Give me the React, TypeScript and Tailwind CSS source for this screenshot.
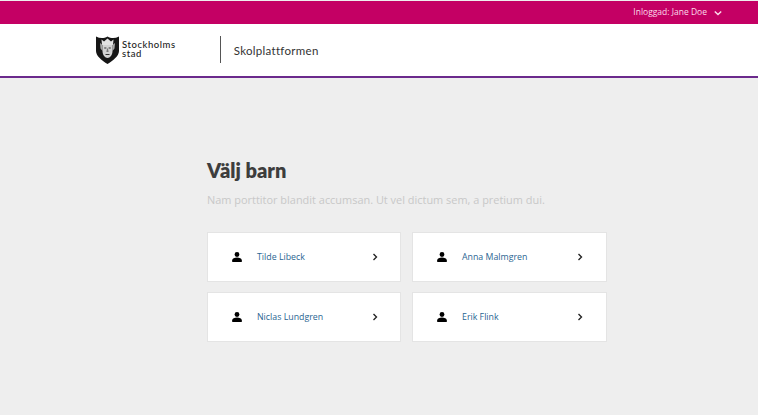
const children = ['Tilde Libeck', 'Anna Malmgren', 'Niclas Lundgren', 'Erik Flink'];

function PersonIcon() {
  return (
    <svg viewBox="0 0 10 10" className="h-[10px] w-[10px] fill-black">
      <circle cx="5" cy="2.5" r="2.4" />
      <path d="M0.2 10 V8.2 C0.2 6.6 2.6 5.6 5 5.6 C7.4 5.6 9.8 6.6 9.8 8.2 V10 Z" />
    </svg>
  );
}

function Chevron({ className }: { className: string }) {
  return (
    <svg viewBox="0 0 8 10" fill="none" stroke="currentColor" strokeWidth="1.8" className={className}>
      <path d="M2 1 L6 5 L2 9" />
    </svg>
  );
}

function Shield() {
  return (
    <svg viewBox="0 0 23 28" className="h-[28px] w-[23px]">
      <path d="M0 0.5 C4 2.5 8 2.5 11.5 0.5 C15 2.5 19 2.5 23 0.5 V15 C23 20 17 24.5 11.5 28 C6 24.5 0 20 0 15 Z" fill="#161616" />
      <path d="M5.5 3.5 L8 5.5 L11.5 2.5 L15 5.5 L17.5 3.5 L17 9 H6 Z" fill="#e2e2e2" />
      <path d="M4 7 L6.5 9 V15 L4.5 12.5 Z M19 7 L16.5 9 V15 L18.5 12.5 Z" fill="#a8a8a8" />
      <path d="M6.5 9 H16.5 V15 C16.5 19 14 22 11.5 22 C9 22 6.5 19 6.5 15 Z" fill="#d2d2d2" />
      <path d="M8.2 11.5 H10.4 V12.5 H8.2 Z M12.6 11.5 H14.8 V12.5 H12.6 Z" fill="#333" />
      <path d="M11 12.5 H12 L12.6 16 H10.4 Z" fill="#777" />
      <path d="M9.5 18 H13.5 V19 H9.5 Z" fill="#333" />
    </svg>
  );
}

export default function App() {
  return (
    <div className="flex min-h-[415px] flex-col bg-[#eeeeee] font-['Open_Sans',sans-serif]">
      <div className="mt-px flex h-[23px] items-center justify-end bg-[#c40064] pr-9 text-[8.5px] text-[#fbdcea]">
        <span>Inloggad: Jane Doe</span>
        <Chevron className="ml-[7px] h-[8px] w-[8px] rotate-90 text-[#fbdcea]" />
      </div>
      <header className="flex h-[54px] items-center border-b-2 border-[#6b2a8c] bg-white pl-[96px]">
        <Shield />
        <div className="ml-[3px] mt-[-3px] font-['Lato',sans-serif] text-[9.5px] font-medium leading-[9px] tracking-[0.55px] text-[#222222]">
          <div>Stockholms</div>
          <div>stad</div>
        </div>
        <div className="ml-[44px] mt-[-1px] h-[27px] w-px bg-[#555555]" />
        <span className="ml-[13px] mt-[1px] font-['Lato',sans-serif] text-[11.5px] tracking-[0.3px] text-[#333333]">Skolplattformen</span>
      </header>
      <main className="pl-[207px] pt-[79px]">
        <h1 className="font-['Lato',sans-serif] text-[20px] font-extrabold leading-[26px] text-[#3d3d3d]">Välj barn</h1>
        <p className="mt-[9px] text-[10.95px] leading-[16px] text-[#c8c8c8]">
          Nam porttitor blandit accumsan. Ut vel dictum sem, a pretium dui.
        </p>
        <div className="mt-[24px] grid w-[400px] grid-cols-[194px_195px] gap-x-[11px] gap-y-[10px]">
          {children.map((name) => (
            <div key={name} className="flex h-[50px] items-center border border-[#e4e4e4] bg-white pl-6">
              <PersonIcon />
              <span className="ml-[15px] mt-[2px] w-[115px] text-[8.8px] text-[#2a6592]">{name}</span>
              <Chevron className="h-[8px] w-[6px] text-[#222222]" />
            </div>
          ))}
        </div>
      </main>
    </div>
  );
}
